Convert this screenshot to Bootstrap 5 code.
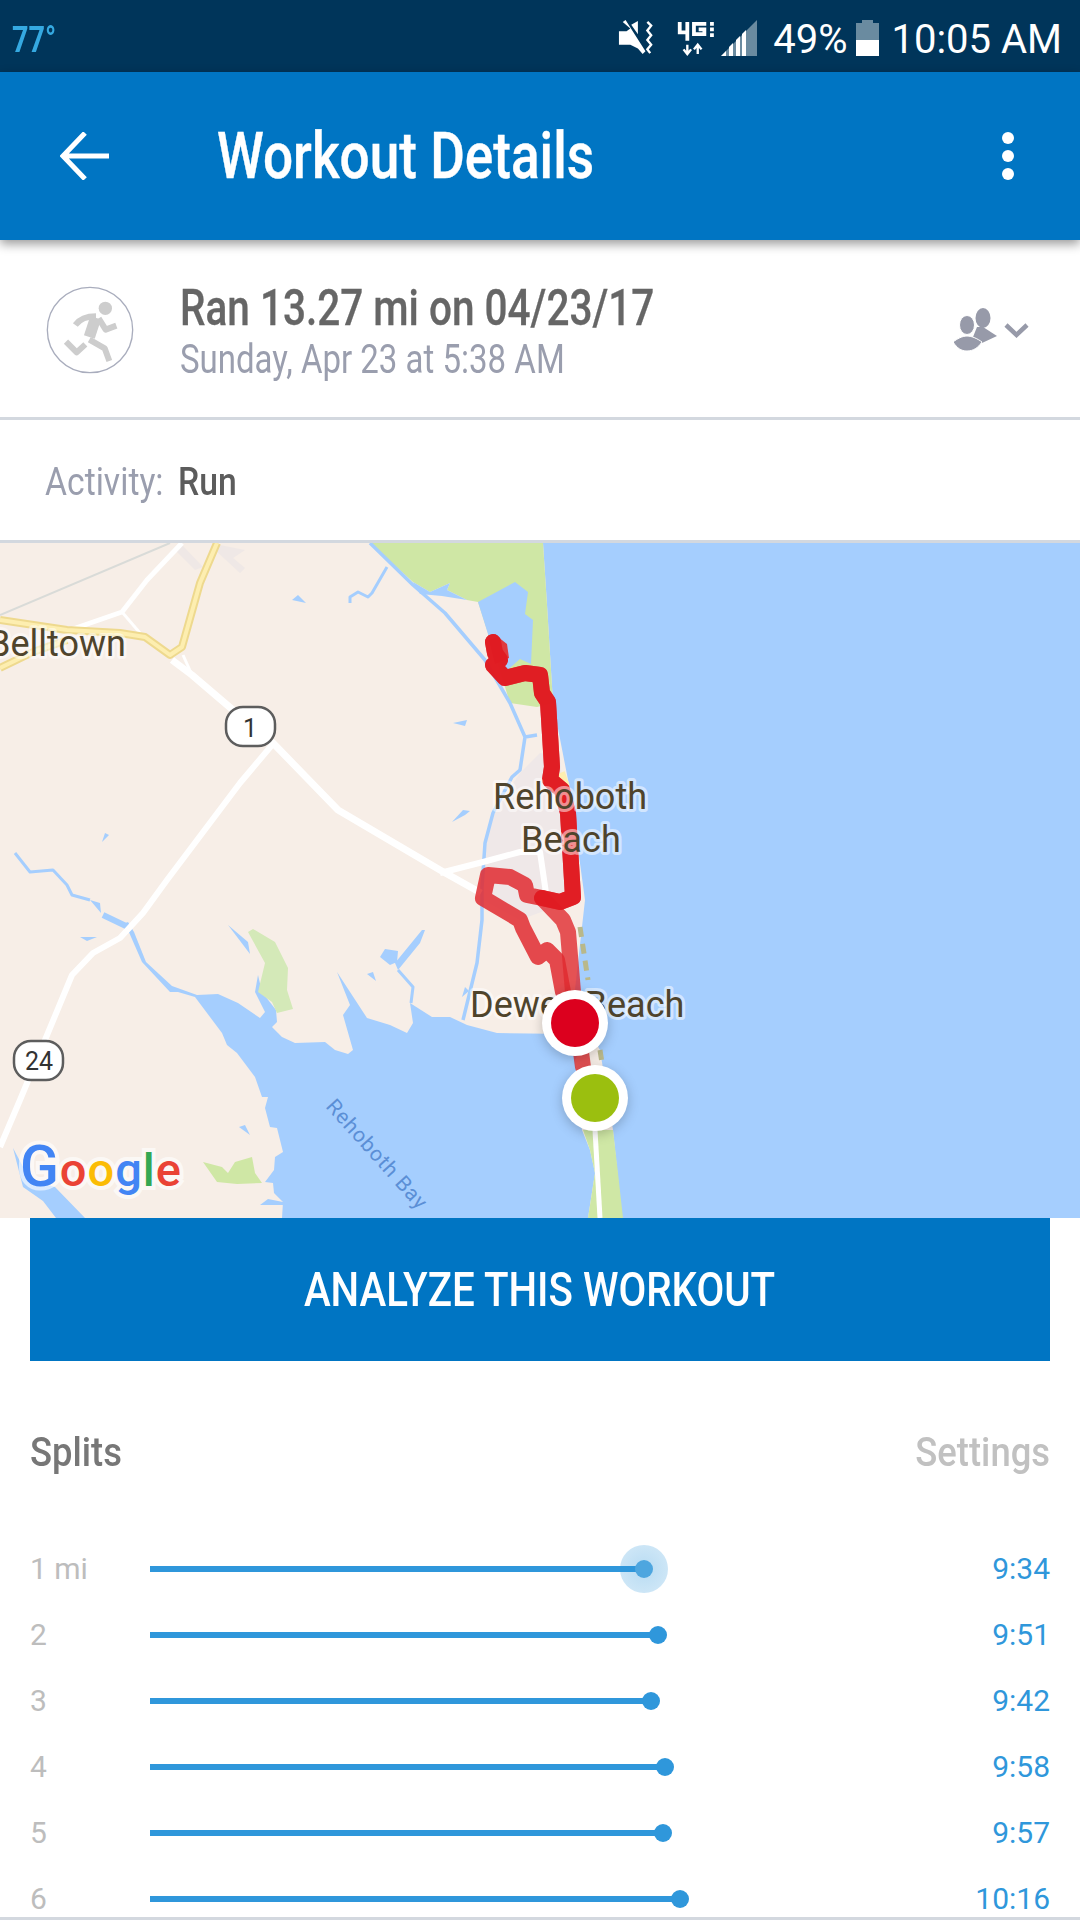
<!DOCTYPE html>
<html lang="en">
<head>
<meta charset="utf-8">
<title>Workout Details</title>
<link rel="stylesheet" href="https://cdn.jsdelivr.net/npm/bootstrap@5.3.0/dist/css/bootstrap.min.css">
<style>
html,body{margin:0;background:#fff}
body{font-family:Roboto,"Liberation Sans",sans-serif}
.screen{width:1080px;height:1920px;overflow:hidden}
.narrow{display:inline-block;transform:scaleX(var(--sx,.86));transform-origin:left center;white-space:nowrap}
.narrow-end{transform-origin:right center}
.narrow-mid{transform-origin:center center}
.stat-bar{height:72px;background:#00355a;color:#fff;padding:3px 18px 0 12px;font-size:40px;line-height:1}
.stat-txt{padding-top:5px}
.temp{--sx:.8;color:#35a9e1;font-size:36px;font-weight:700}
.gap-mute{margin-right:14px}
.gap-net{margin-right:5px}
.gap-sig{margin-right:16px}
.gap-pct{margin-right:9px}
.gap-bat{margin-right:12px}
.app-bar{height:168px;background:#0075c3;color:#fff;padding:0 65px 0 60px;box-shadow:0 4px 10px rgba(0,0,0,.4);position:relative;z-index:2}
.app-title{--sx:.83;font-size:64px;font-weight:500;line-height:1;margin-left:108px;padding-top:2px;-webkit-text-stroke:.4px #fff}
.head-row{height:177px;padding:2px 50px 0 30px}
.head-text{margin-left:30px;padding-top:7px}
.run-title{--sx:.81;font-size:50px;font-weight:500;color:#666;line-height:52px;-webkit-text-stroke:.3px #666}
.run-sub{--sx:.825;font-size:40px;color:#9a9eae;line-height:51px}
.rule{height:3px;background:#d3d8df}
.act-row{--sx:.887;height:120px;padding:4px 45px 0;font-size:38px}
.act-key{color:#9a9eae;width:133px}
.act-val{color:#5c5c5c;font-weight:500}
.map-box{display:block;width:1080px;height:675px}
.cta-wrap{padding:0 30px}
.cta{--sx:.84;height:143px;background:#0075c3;border:0;color:#fff;font-size:48px;font-weight:500;line-height:1}
.splits-head{--sx:.91;height:175px;padding:0 30px 53px;font-size:40px;font-weight:500}
.splits-title{color:#777}
.splits-link{color:#c1c1c1}
.splits-list{min-height:0;overflow:hidden}
.split-row{height:66px;flex:none;padding:0 30px;font-size:30px;line-height:1}
.split-lab{width:120px;color:#bdbdbd}
.split-track{flex:1}
.split-bar{height:6px;background:#2f97db;position:relative}
.split-bar::after{content:"";position:absolute;right:-9px;top:-6px;width:18px;height:18px;border-radius:50%;background:#2f97db}
.split-halo::before{content:"";position:absolute;right:-24px;top:-21px;width:48px;height:48px;border-radius:50%;background:radial-gradient(circle,rgba(47,151,219,.34) 0,rgba(47,151,219,.2) 100%)}
.split-halo::after{background:#4ea6df}
.split-time{color:#2f97db}
.mk{filter:drop-shadow(0 3px 6px rgba(0,0,0,.22))}
.lab{font-family:Roboto,sans-serif;font-size:36px;fill:#4f442c;stroke:rgba(255,255,255,.5);stroke-width:6px;paint-order:stroke;stroke-linejoin:round}
</style>
</head>
<body>
<div class="screen d-flex flex-column">

  <div class="stat-bar d-flex align-items-center justify-content-between flex-shrink-0">
    <span class="temp narrow stat-txt">77°</span>
    <div class="d-flex align-items-center">
      <svg class="gap-mute" width="40" height="36" viewBox="0 0 40 38"><path d="M2 12h8l4-3-8-7 3-2 21 33-3 3-5-6-8-4H2z M15 5l7-4v14z" fill="#fff"/><path d="M32 2l4 4-4 5 4 5-4 5 4 5-4 5 3 4" fill="none" stroke="#fff" stroke-width="2.5"/></svg>
      <svg class="gap-net" width="46" height="36" viewBox="0 0 46 38"><path d="M9 2v11h8M17 2v20" fill="none" stroke="#fff" stroke-width="4"/><path d="M37 4H24v11h11V10h-6" fill="none" stroke="#fff" stroke-width="4"/><path d="M41 2h4v4h-4zM41 8h4v4h-4zM41 14h4v4h-4z" fill="#fff"/><path d="M17 26v8M13 31l4 5 4-5M28 36v-8M24 31l4-5 4 5" fill="none" stroke="#fff" stroke-width="2.5"/></svg>
      <svg class="gap-sig" width="36" height="36" viewBox="0 0 36 36"><path d="M36 0v36H0z" fill="#6a8ba0"/><path d="M0 36l5-5v5zM8 36v-9l4-4v13zM15 36V20l4-4v20zM21 36V14l4-4v26z" fill="#fff"/></svg>
      <span class="stat-txt gap-pct">49%</span>
      <svg class="gap-bat" width="23" height="36" viewBox="0 0 23 36"><path d="M6 0h11v3h6v17H0V3h6z" fill="#6a8ba0"/><path d="M0 20h23v16H0z" fill="#fff"/></svg>
      <span class="stat-txt">10:05 AM</span>
    </div>
  </div>

  <div class="app-bar d-flex align-items-center flex-shrink-0">
    <svg width="49" height="48" viewBox="0 0 49 48"><path d="M49 24H4M25 1L3 24l22 23" fill="none" stroke="#fff" stroke-width="5"/></svg>
    <span class="app-title narrow flex-grow-1">Workout Details</span>
    <svg width="14" height="50" viewBox="0 0 14 50"><circle cx="7" cy="7" r="6" fill="#fff"/><circle cx="7" cy="25" r="6" fill="#fff"/><circle cx="7" cy="43" r="6" fill="#fff"/></svg>
  </div>

  <div class="head-row d-flex align-items-center flex-shrink-0">
    <svg width="120" height="110" viewBox="0 0 360 330">
      <circle cx="180" cy="165" r="128" fill="none" stroke="#a9adbd" stroke-width="4"/>
      <circle cx="226" cy="100" r="20" fill="#cdcdcd"/>
      <path d="M197 128l-19 58" fill="none" stroke="#cdcdcd" stroke-width="34"/>
      <path d="M136 150c12-16 34-26 62-26M206 130l21 34 32-12M108 200l32 32 26-24M178 194l46 26 14 38" fill="none" stroke="#cdcdcd" stroke-width="18" stroke-linejoin="round"/>
    </svg>
    <div class="head-text flex-grow-1">
      <div class="run-title"><span class="narrow">Ran 13.27 mi on 04/23/17</span></div>
      <div class="run-sub"><span class="narrow">Sunday, Apr 23 at 5:38 AM</span></div>
    </div>
    <svg width="76" height="46" viewBox="0 0 76 46"><ellipse cx="29" cy="11" rx="7.5" ry="10" fill="#979aa9"/><path d="M23 20h6l14 9-15 7-9-6z" fill="#979aa9"/><ellipse cx="13" cy="18" rx="7.5" ry="9.5" fill="#979aa9" stroke="#fff" stroke-width="1"/><path d="M-1 35c4-3 9-6 14-6s11 3 15 6c-4 6-9 9-15 9S3 41-1 35z" fill="#979aa9" stroke="#fff" stroke-width="1"/><path d="M52 18l10.500 10 10.500-10" fill="none" stroke="#979aa9" stroke-width="4.500"/></svg>
  </div>
  <div class="rule flex-shrink-0"></div>

  <div class="act-row d-flex align-items-center flex-shrink-0">
    <span class="act-key"><span class="narrow">Activity:</span></span>
    <span class="act-val"><span class="narrow">Run</span></span>
  </div>
  <div class="rule flex-shrink-0"></div>

  <svg class="map-box flex-shrink-0" viewBox="0 543 1080 675">
    <rect x="0" y="543" width="1080" height="675" fill="#f7eee7"/>
    <path d="M540 753l20 4 13 143-53 20-37-20 2-60 12-33 23-34z" fill="#efe8e8"/>
    <path d="M182 545l21 22-8 3-19-19zM220 545l25 5-12 8 12 10-5 5-27-25z" fill="#efe8e6"/>
    <!-- sea and bay -->
    <path d="M543 543H1080V1218H622L613 1130 600 1050 590 1033 575 1060 582 1130 590 1150 595 1173 588 1218H282L283 1202 274 1193 273 1183 265 1182 274 1170 275 1157 283 1152 277 1128 270 1127 265 1108 268 1097 262 1097 255 1077 237 1053 227 1045 222 1033 195 997 178 992 170 992 142 962 128 930 120 925 128 922 134 932 146 962 172 986 197 995 218 994 238 1003 260 1018 265 1012 255 992 258 975 262 992 276 1010 277 1022 272 1027 282 1037 295 1043 325 1042 335 1050 348 1054 353 1050 343 1015 350 1005 337 972 367 1018 390 1025 407 1033 413 1023 410 1003 432 1017 450 1017 467 1025 497 1033 570 1034 585 900 570 790 553 703 547 605z" fill="#a5cefe"/>
    <path d="M13 1148l17 32 25 7 30 31H56l-13-17-20-14z" fill="#a5cefe"/>
    <!-- greens -->
    <path d="M370 543H543L547 605 553 703 537 707 510 703 505 687 487 630 478 602 467 600 447 590 450 583 430 592 413 582z" fill="#cfe7a5"/>
    <path d="M478 602L515 582 528 592 525 614 533 620 531 664 520 659 505 672 493 650z" fill="#a5cefe"/>
    <path d="M248 932l5-3 22 13 13 26-1 22 6 19-16 4-5-11-14-10 7-29z" fill="#d4e9b8"/>
    <path d="M203 1162l19 5 6 6 7-11 17-5 3 16 7 10-25 1-20-2z" fill="#cfe7a5"/>
    <path d="M583 1130l7 20 5 23-7 45h35l-5-45-5-43z" fill="#cfe7a5"/>
    <!-- water details -->
    <g fill="#a5cefe">
      <path d="M292 600l6-5 8 8zM413 582l17 10 20-9-3 7 20 10-25-4-22-2zM453 723l14-3-2 6zM452 822l11-12 7 1-5 4zM102 842l3-9 4 2zM80 937h17l-10 4zM228 925l20 17 2 12zM380 957l5-8 13 2-1 11-7 3zM367 974l6-2 3 9zM239 1127l6-2 5 10zM260 1205l8-6 15 3v3zM462 997l3-10 4 4zM90 900l10 3 1 10zM422 930h3l-5 13-22 27-3-7z"/>
    </g>
    <g fill="none" stroke="#a5cefe" stroke-linejoin="round">
      <path d="M370 543l43 42 32 28 40 47 25 43 15 34 12-2M525 737l-5 33-8 7-19 36-8 30-3 44v33l-5 43-14 57" stroke-width="3.500"/>
      <path d="M387 567l-15 26-4 4-10-5-8 5v6M15 853l15 19 23-2 14 15 5 10 18 5" stroke-width="3"/>
      <path d="M103 915l25 12" stroke-width="6"/>
      <path d="M398 970l15 17-2 16" stroke-width="3"/>
    </g>
    <!-- roads -->
    <path d="M0 615L170 543" fill="none" stroke="#d9dbd8" stroke-width="2"/>
    <g fill="none" stroke="#fff" stroke-linejoin="round">
      <path d="M182 543l-35 37-25 32-52 18" stroke-width="5"/>
      <path d="M122 612l18 21M183 655l9 20" stroke-width="3"/>
      <path d="M172 660l20 15 41 35 40 33 65 67 102 60 41 23" stroke-width="7"/>
      <path d="M272 745l-32 38-73 97-24 33-23 25-27 15-21 22-27 65-25 60-20 47" stroke-width="6"/>
      <path d="M440 873l43-11 37-10h20l7 48" stroke-width="6"/>
      <path d="M595 1130l5 88" stroke-width="5"/>
    </g>
    <g fill="none" stroke-linejoin="round">
      <path d="M0 620l67 10 53 3 25 4 25 18 12-8 18-64 17-40M0 668l33-16 34-12" stroke="#eed98e" stroke-width="8"/>
      <path d="M0 620l67 10 53 3 25 4 25 18 12-8 18-64 17-40M0 668l33-16 34-12" stroke="#fdeeb0" stroke-width="4"/>
      <path d="M580 927l8 53M600 1050l2 13" stroke="#b9b88a" stroke-width="5" stroke-dasharray="10 7"/>
      <path d="M560 773l5 14" stroke="#fdeeb0" stroke-width="10"/>
    </g>
    <!-- route -->
    <path d="M489 640l9-3 9 7 2 14-14 6z" fill="#df3a3e"/>
    <g fill="none" stroke-linejoin="round" stroke-linecap="round" stroke-width="16">
      <path d="M493 642l2 11 5 7-7 5 12 13 20-5 15 2 2 18 6 9 4 65-2 13 12 10 6 23 5 84-13 5-18-4-15-3-2-10-15-8-22-2-5 23 37 22 3 8 15 29 9-7 10 10 6 32" stroke="#e02a30" stroke-opacity=".85"/>
      <path d="M542 898l21 22 5 12 5 60 10 75" stroke="#e02a30" stroke-opacity=".8"/>
      <path d="M493 642l2 11 5 7-7 5 12 13 20-5 15 2 2 18 6 9 4 65-2 13 12 10 6 23 5 84-13 5-18-4" stroke="#e01a20" stroke-opacity=".9"/>
    </g>
    <!-- labels -->
    <text class="lab" x="-12" y="656">Belltown</text>
    <text class="lab" x="493" y="809">Rehoboth</text>
    <text class="lab" x="521" y="852">Beach</text>
    <text class="lab" x="470" y="1017">Dewey Beach</text>
    <text x="325" y="1107" transform="rotate(48 325 1107)" font-family="Roboto,sans-serif" font-size="21" letter-spacing=".9" fill="#5b8fd6">Rehoboth Bay</text>
    <!-- shields -->
    <rect x="226" y="707" width="49" height="39" rx="17" fill="#fff" stroke="#5d5d5d" stroke-width="2.500"/>
    <text x="250" y="737" text-anchor="middle" font-family="Roboto,sans-serif" font-size="25" fill="#333">1</text>
    <rect x="14" y="1041" width="49" height="39" rx="17" fill="#fff" stroke="#5d5d5d" stroke-width="2.500"/>
    <text x="39" y="1070" text-anchor="middle" font-family="Roboto,sans-serif" font-size="25" fill="#333">24</text>
    <!-- logo -->
    <text x="20" y="1186" font-family="Roboto,sans-serif" font-size="47" font-weight="500" letter-spacing="1" stroke="rgba(255,255,255,.6)" stroke-width="8" paint-order="stroke"><tspan fill="#4285f4" font-size="57">G</tspan><tspan fill="#ea4335">o</tspan><tspan fill="#fbbc05">o</tspan><tspan fill="#4285f4">g</tspan><tspan fill="#34a853">l</tspan><tspan fill="#ea4335">e</tspan></text>
    <!-- markers -->
    <g class="mk"><circle cx="575" cy="1023" r="33" fill="#fff"/><circle cx="575" cy="1023" r="24" fill="#dc001e"/></g>
    <g class="mk"><circle cx="595" cy="1098" r="33" fill="#fff"/><circle cx="595" cy="1098" r="24" fill="#9bbf0f"/></g>
  </svg>

  <div class="cta-wrap flex-shrink-0">
    <button type="button" class="btn cta rounded-0 w-100 d-flex align-items-center justify-content-center"><span class="narrow narrow-mid">ANALYZE THIS WORKOUT</span></button>
  </div>

  <div class="splits-head d-flex align-items-end justify-content-between flex-shrink-0">
    <span class="splits-title"><span class="narrow">Splits</span></span>
    <span class="splits-link"><span class="narrow narrow-end">Settings</span></span>
  </div>

  <div class="splits-list flex-grow-1 d-flex flex-column">
    <div class="split-row d-flex align-items-center"><span class="split-lab">1 mi</span><div class="split-track"><div class="split-bar split-halo" style="width:494px"></div></div><span class="split-time">9:34</span></div>
    <div class="split-row d-flex align-items-center"><span class="split-lab">2</span><div class="split-track"><div class="split-bar" style="width:508px"></div></div><span class="split-time">9:51</span></div>
    <div class="split-row d-flex align-items-center"><span class="split-lab">3</span><div class="split-track"><div class="split-bar" style="width:501px"></div></div><span class="split-time">9:42</span></div>
    <div class="split-row d-flex align-items-center"><span class="split-lab">4</span><div class="split-track"><div class="split-bar" style="width:515px"></div></div><span class="split-time">9:58</span></div>
    <div class="split-row d-flex align-items-center"><span class="split-lab">5</span><div class="split-track"><div class="split-bar" style="width:513px"></div></div><span class="split-time">9:57</span></div>
    <div class="split-row d-flex align-items-center"><span class="split-lab">6</span><div class="split-track"><div class="split-bar" style="width:530px"></div></div><span class="split-time">10:16</span></div>
  </div>
  <div class="rule flex-shrink-0"></div>
</div>
<script src="https://cdn.jsdelivr.net/npm/bootstrap@5.3.0/dist/js/bootstrap.bundle.min.js"></script>
</body>
</html>
